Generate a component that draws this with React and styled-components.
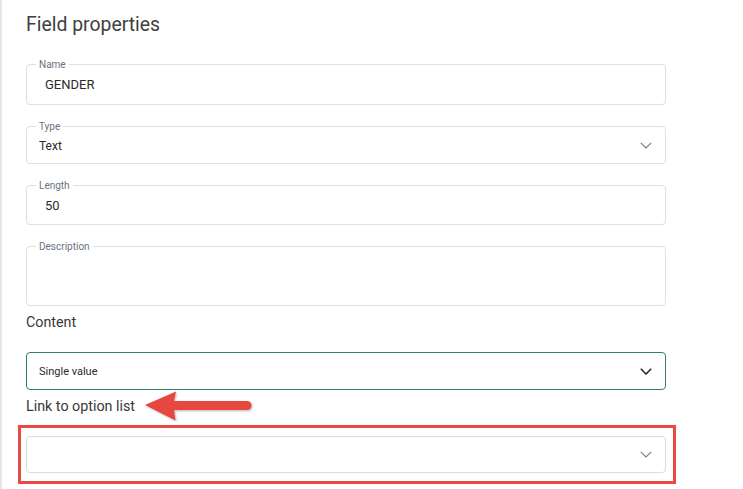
import React from 'react'
import styled, { createGlobalStyle } from 'styled-components'

const GlobalStyle = createGlobalStyle`
  html, body {
    margin: 0;
    background: #fff;
  }
  body {
    font-family: Roboto, 'Noto Sans', Arial, sans-serif;
    color: #333;
  }
`

const Page = styled.div`
  min-height: 100vh;
  box-sizing: border-box;
  border-left: 2px solid #e4e7eb;
  padding: 13px 0 0 24px;
`

const Panel = styled.div`
  width: 640px;
  display: flex;
  flex-direction: column;
`

const Title = styled.h2`
  margin: 0 0 22px;
  font-size: 19.4px;
  line-height: 24px;
  font-weight: 400;
  color: #404040;
`

const Field = styled.fieldset`
  margin: 0 0 ${({ $gap }) => $gap}px;
  padding: 0;
  min-width: 0;
  border: 1px solid #dcdfe4;
  border-radius: 4px;
`

const Legend = styled.legend`
  margin-left: 9px;
  padding: 0 3px;
  font-size: 10px;
  line-height: 11px;
  color: #6b7280;
`

const Value = styled.div`
  box-sizing: border-box;
  height: ${({ $height }) => $height}px;
  display: flex;
  align-items: center;
  justify-content: space-between;
  padding: 0 13px ${({ $lift }) => $lift}px ${({ $inset }) => $inset}px;
  font-size: ${({ $size }) => $size}px;
  color: #2b2b2b;
`

const SectionLabel = styled.div`
  position: relative;
  margin-top: ${({ $top }) => $top}px;
  font-size: 14.3px;
  line-height: 20px;
  color: #383838;
`

const Select = styled.div`
  position: relative;
  box-sizing: border-box;
  margin-top: 20px;
  height: ${({ $height }) => $height}px;
  display: flex;
  align-items: center;
  justify-content: space-between;
  padding: 0 13px 0 12px;
  border: 1px solid ${({ $active }) => ($active ? '#2f7f70' : '#dcdcdc')};
  border-radius: 4px;
  font-size: 11px;
  color: #2b2b2b;
`

const Highlight = styled.div`
  position: absolute;
  top: -12px;
  left: -9px;
  right: -11px;
  bottom: -12px;
  border: 3px solid #e84b43;
  pointer-events: none;
`

const Arrow = styled.svg`
  position: absolute;
  left: 117px;
  top: -7px;
  filter: drop-shadow(1px 1.5px 1px rgba(0, 0, 0, 0.28));
`

const Chevron = ({ color = '#777', width = 1.1 }) => (
  <svg width="12" height="7" viewBox="0 0 12 7" fill="none">
    <path d="M0.8 0.8 L6 6 L11.2 0.8" stroke={color} strokeWidth={width} />
  </svg>
)

export default function App() {
  return (
    <Page>
      <GlobalStyle />
      <Panel>
        <Title>Field properties</Title>

        <Field $gap={16}>
          <Legend>Name</Legend>
          <Value $height={34} $lift={6} $inset={18} $size={13}>
            GENDER
          </Value>
        </Field>

        <Field $gap={16}>
          <Legend>Type</Legend>
          <Value $height={31} $lift={4} $inset={12} $size={12}>
            Text
            <Chevron color="#7a7a7a" />
          </Value>
        </Field>

        <Field $gap={16}>
          <Legend>Length</Legend>
          <Value $height={33} $lift={5} $inset={18} $size={13}>
            50
          </Value>
        </Field>

        <Field $gap={6}>
          <Legend>Description</Legend>
          <Value $height={53} $lift={0} $inset={18} $size={13} />
        </Field>

        <SectionLabel $top={0}>Content</SectionLabel>

        <Select $active $height={38}>
          Single value
          <Chevron color="#222" width={1.5} />
        </Select>

        <SectionLabel $top={6}>
          Link to option list
          <Arrow width="110" height="34" viewBox="0 0 110 34">
            <path
              d="M2 16 L33 2.5 L31 12 L104 12 A4.5 4.5 0 0 1 104 21 L31 21 L32.5 31.5 Z"
              fill="#e8473f"
            />
          </Arrow>
        </SectionLabel>

        <Select $height={37}>
          <span />
          <Chevron color="#7a7a7a" />
          <Highlight />
        </Select>
      </Panel>
    </Page>
  )
}
